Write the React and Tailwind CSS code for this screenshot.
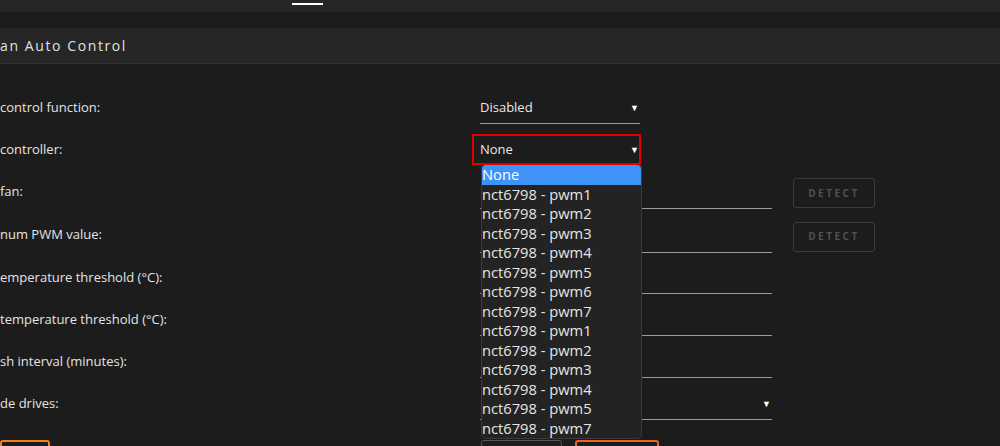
import React from "react";

const font = { fontFamily: '"Open Sans", "Noto Sans", sans-serif' };

function Row({ label, h, children }) {
  return (
    <div className={`flex ${h} items-center`}>
      <div className="w-[480px] shrink-0 text-[13px] text-[#e4e4e4]">{label}</div>
      <div className="flex items-center">{children}</div>
    </div>
  );
}

function Line({ w = "w-[292px]", text, arrow }) {
  return (
    <div className={`flex h-[32px] ${w} items-center justify-between border-b border-[#9a9a9a] text-[13px] text-[#e8e8e8]`}>
      <span>{text}</span>
      {arrow && <span className="pr-[1px] text-[9px] text-white">▼</span>}
    </div>
  );
}

function Detect() {
  return (
    <button className="ml-[21px] flex h-[30px] w-[82px] items-center justify-center rounded-[3px] border border-[#3a3a3a] text-[10px] font-bold tracking-[2.5px] text-[#515151]">
      DETECT
    </button>
  );
}

const items = [
  "None",
  "nct6798 - pwm1",
  "nct6798 - pwm2",
  "nct6798 - pwm3",
  "nct6798 - pwm4",
  "nct6798 - pwm5",
  "nct6798 - pwm6",
  "nct6798 - pwm7",
  "nct6798 - pwm1",
  "nct6798 - pwm2",
  "nct6798 - pwm3",
  "nct6798 - pwm4",
  "nct6798 - pwm5",
  "nct6798 - pwm7",
];

export default function App() {
  return (
    <div className="relative h-[446px] w-[1000px] overflow-hidden bg-[#1c1c1c]" style={font}>
      <div className="h-[12px] bg-[#262626] pl-[292px] pt-[3px]">
        <div className="h-[2px] w-[31px] bg-white" />
      </div>
      <div className="h-[16px]" />
      <div className="flex h-[36px] items-center border-b border-[#2f2f2f] bg-[#262626] text-[14px] tracking-[1.6px] text-[#e0e0e0]">
        an Auto Control
      </div>
      <div className="pt-[23px]">
        <Row h="h-[42px]" label="control function:">
          <Line w="w-[160px]" text="Disabled" arrow />
        </Row>
        <Row h="h-[41px]" label=" controller:">
          <div className="relative -ml-[8px] flex h-[31px] w-[169px] items-center justify-between border-2 border-[#e00000] pl-[6px] text-[13px] text-[#e8e8e8]">
            <span>None</span>
            <span className="text-[9px] text-white">▼</span>
            <div className="absolute left-[7px] top-[29px] z-10 w-[161px] overflow-hidden rounded-b-[5px] border border-t-0 border-[#3a3a3a] bg-[#232323]">
              {items.map((it, i) => (
                <div
                  key={i}
                  className={`h-[19.5px] text-[14.7px] leading-[19.5px] ${
                    i === 0 ? "rounded-t-[4px] bg-[#3d94f6] text-white" : "text-[#e6e6e6]"
                  }`}
                >
                  {it}
                </div>
              ))}
            </div>
          </div>
        </Row>
        <Row h="h-[43px]" label=" fan:">
          <div className="mt-[3px] flex items-center">
            <Line />
            <Detect />
          </div>
        </Row>
        <Row h="h-[44px]" label="num PWM value:">
          <div className="mt-[3px] flex items-center">
            <Line />
            <Detect />
          </div>
        </Row>
        <Row h="h-[42px]" label="emperature threshold (°C):">
          <Line />
        </Row>
        <Row h="h-[42px]" label="temperature threshold (°C):">
          <Line />
        </Row>
        <Row h="h-[42px]" label="sh interval (minutes):">
          <Line />
        </Row>
        <Row h="h-[42px]" label="de drives:">
          <Line arrow />
        </Row>
      </div>
      <div className="mt-[15px] flex">
        <div className="h-[20px] w-[50px] rounded-[3px] border-2 border-[#f08020]" />
        <div className="ml-[431px] h-[20px] w-[81px] rounded-[3px] border border-[#555]" />
        <div className="ml-[13px] h-[20px] w-[84px] rounded-[3px] border-2 border-[#f0602a]" />
      </div>
    </div>
  );
}
